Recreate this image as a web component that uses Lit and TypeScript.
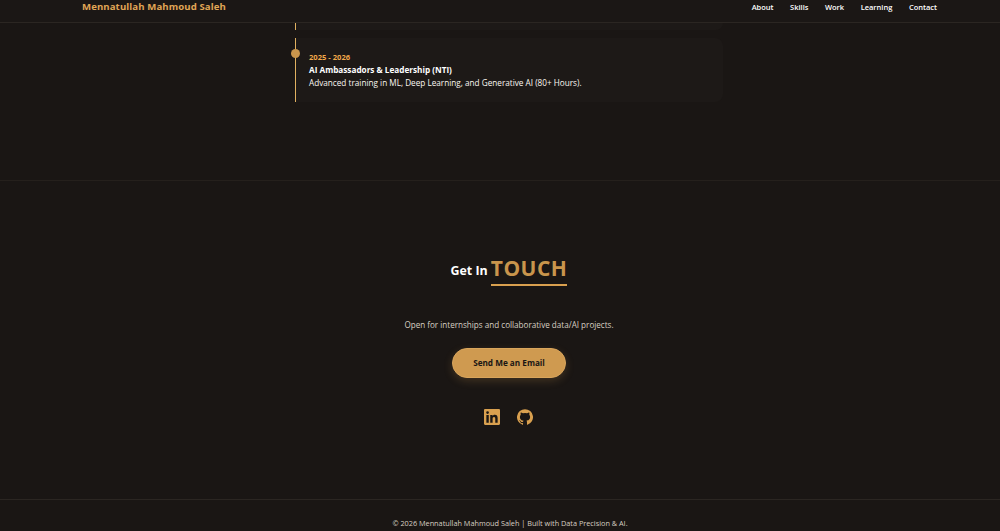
import { LitElement, html, css } from "lit";
import { customElement } from "lit/decorators.js";

@customElement("app-root")
export class AppRoot extends LitElement {
  static styles = css`
    :host { display: block; height: 531px; overflow: hidden; background: #1a1614; font-family: "Open Sans", "Noto Sans", sans-serif; color: #fff; }
    nav { height: 22px; border-bottom: 1px solid #2b2622; background: #1b1715; display: flex; justify-content: space-between; align-items: flex-start; padding: 0 63px 0 82px; box-sizing: content-box; }
    .brand { font-size: 9.6px; font-weight: 700; color: #e0a655; letter-spacing: 0.1px; line-height: 13px; }
    .links { display: flex; gap: 16.5px; font-size: 7.5px; font-weight: 600; line-height: 14px; }
    .timeline { width: 428px; margin-left: 295px; }
    .stub { height: 7px; border-left: 1.5px solid #e0b060; background: #1d1917; border-radius: 0 0 8px 0; }
    .item { margin-top: 8px; height: 64px; border-left: 1.5px solid #e0b060; background: #1d1917; border-radius: 0 8px 8px 0; padding: 14px 0 0 13px; box-sizing: border-box; position: relative; }
    .dot { position: absolute; left: -5px; top: 11px; width: 9px; height: 9px; border-radius: 50%; background: #c9954c; }
    .date { font-size: 7.6px; font-weight: 700; color: #f0a84a; line-height: 11px; }
    .title { font-size: 8.2px; font-weight: 700; line-height: 13px; margin-top: 0; }
    .desc { font-size: 8.2px; line-height: 13px; margin-top: 0; color: #fbf7f0; }
    .contact { margin-top: 78px; border-top: 1px solid #25201c; height: 319px; box-sizing: border-box; display: flex; flex-direction: column; align-items: center; padding: 73px 0 0 18px; }
    h2 { margin: 0; display: flex; align-items: flex-end; gap: 3px; font-size: 12.4px; font-weight: 700; }
    .in { line-height: 26px; padding-bottom: 2px; }
    .touch { font-size: 21px; font-weight: 700; color: #c9954c; letter-spacing: 0.5px; border-bottom: 2px solid #d9a04f; padding-bottom: 2px; line-height: 28px; }
    p { margin: 33px 0 0; font-size: 8.1px; line-height: 12px; color: #d8cfc3; }
    .btn { margin-top: 17px; width: 114px; height: 30px; border-radius: 15px; background: #cf9a50; border: 1px solid #d9a55c; box-sizing: border-box; color: #1a1614; font-size: 8.2px; font-weight: 700; display: flex; align-items: center; justify-content: center; padding-bottom: 1px; box-shadow: 0 3px 8px rgba(201,149,76,.22); }
    .social { display: flex; gap: 17px; margin: 31px 1px 0 0; color: #d9a04f; }
    .social svg { width: 16px; height: 16px; display: block; fill: currentColor; }
    footer { border-top: 1px solid #2b2622; height: 31px; box-sizing: border-box; text-align: center; font-size: 7.3px; color: #d8cfc3; padding: 17px 0 0 20px; line-height: 12px; }
  `;
  render() {
    return html`
      <nav>
        <div class="brand">Mennatullah Mahmoud Saleh</div>
        <div class="links"><span>About</span><span>Skills</span><span>Work</span><span>Learning</span><span>Contact</span></div>
      </nav>
      <div class="timeline">
        <div class="stub"></div>
        <div class="item">
          <span class="dot"></span>
          <div class="date">2025 - 2026</div>
          <div class="title">AI Ambassadors &amp; Leadership (NTI)</div>
          <div class="desc">Advanced training in ML, Deep Learning, and Generative AI (80+ Hours).</div>
        </div>
      </div>
      <section class="contact">
        <h2><span class="in">Get In</span><span class="touch">TOUCH</span></h2>
        <p>Open for internships and collaborative data/AI projects.</p>
        <div class="btn">Send Me an Email</div>
        <div class="social">
          <svg viewBox="0 0 24 24"><path d="M20.45 20.45h-3.55v-5.57c0-1.33-.03-3.04-1.85-3.04-1.85 0-2.14 1.45-2.14 2.94v5.67H9.35V9h3.41v1.56h.05c.48-.9 1.64-1.85 3.37-1.85 3.6 0 4.27 2.37 4.27 5.46v6.28zM5.34 7.43a2.06 2.06 0 1 1 0-4.12 2.06 2.06 0 0 1 0 4.12zM7.12 20.45H3.56V9h3.56v11.45zM22.22 0H1.77C.79 0 0 .77 0 1.73v20.54C0 23.23.79 24 1.77 24h20.45c.98 0 1.78-.77 1.78-1.73V1.73C24 .77 23.2 0 22.22 0z"/></svg>
          <svg viewBox="0 0 24 24"><path d="M12 .3a12 12 0 0 0-3.79 23.39c.6.11.82-.26.82-.58v-2.03c-3.34.73-4.04-1.61-4.04-1.61-.55-1.39-1.33-1.76-1.33-1.76-1.09-.74.08-.73.08-.73 1.2.09 1.84 1.24 1.84 1.24 1.07 1.83 2.81 1.3 3.5 1 .1-.78.42-1.31.76-1.61-2.67-.3-5.47-1.33-5.47-5.93 0-1.31.47-2.38 1.24-3.22-.14-.3-.54-1.52.1-3.18 0 0 1-.32 3.3 1.23a11.5 11.5 0 0 1 6 0c2.28-1.55 3.29-1.23 3.29-1.23.64 1.65.24 2.87.12 3.18.77.84 1.23 1.91 1.23 3.22 0 4.61-2.8 5.62-5.48 5.92.42.36.81 1.1.81 2.22v3.29c0 .32.22.7.82.58A12 12 0 0 0 12 .3z"/></svg>
        </div>
      </section>
      <footer>© 2026 Mennatullah Mahmoud Saleh | Built with Data Precision &amp; AI.</footer>
    `;
  }
}
